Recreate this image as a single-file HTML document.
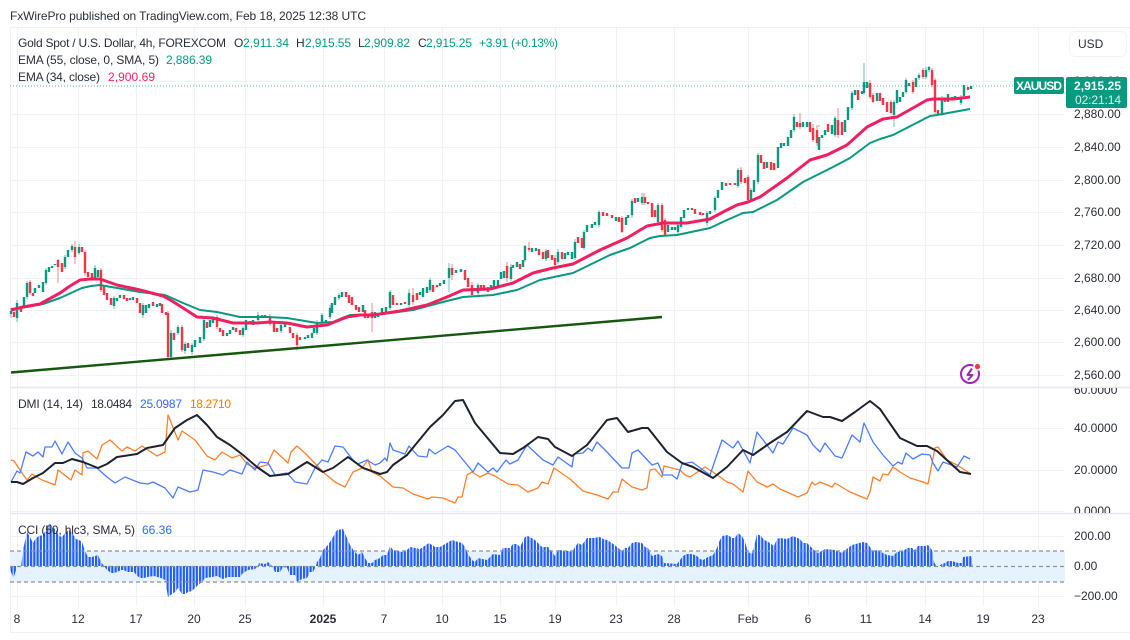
<!DOCTYPE html>
<html><head><meta charset="utf-8"><title>XAUUSD</title>
<style>
html,body{margin:0;padding:0;background:#fff;width:1130px;height:640px;overflow:hidden}
svg{display:block;filter:blur(.3px)}
text{font-family:"Liberation Sans",sans-serif;font-size:12px;fill:#2a2e39}
.g{stroke:#089981;fill:none;stroke-width:2.4}
.r{stroke:#f23645;fill:none;stroke-width:2.4}
.w{stroke-width:1;opacity:.6}
.t{text-anchor:middle}
.k{fill:#089981}.p{fill:#f2245f}
</style></head><body>
<svg width="1130" height="640" viewBox="0 0 1130 640" xmlns="http://www.w3.org/2000/svg">
<defs>
<pattern id="st" patternUnits="userSpaceOnUse" x="10" y="0" width="3.25" height="640"><rect x="0.5" y="0" width="2.2" height="640" fill="#1f5cff"/></pattern>
<clipPath id="c1"><rect x="1066" y="388" width="64" height="125"/></clipPath>
</defs>
<rect width="1130" height="640" fill="#fff"/>
<text x="10" y="20" textLength="356">FxWirePro published on TradingView.com, Feb 18, 2025 12:38 UTC</text>

<!-- frame -->
<path d="M10 27.5H1130M10 632.5H1130M10.5 27V632" stroke="#f0f1f5" fill="none"/>
<!-- grid -->
<path stroke="#f1f2f6" fill="none" d="M17.5 28V606M78.5 28V606M136.5 28V606M194.5 28V606M245.5 28V606M323.5 28V606M384.5 28V606M442.5 28V606M500.5 28V606M555.5 28V606M616.5 28V606M674.5 28V606M748.5 28V606M808.5 28V606M866.5 28V606M925.5 28V606M983.5 28V606M1038.5 28V606
M10 81.5H1065M10 114.5H1065M10 147.5H1065M10 180.5H1065M10 212.5H1065M10 245.5H1065M10 278.5H1065M10 310.5H1065M10 342.5H1065M10 375.5H1065
M10 428.5H1065M10 470.5H1065M10 511.5H1065M10 536.5H1065M10 596.5H1065"/>
<path d="M10 387.5H1130M10 513.5H1130" stroke="#e6e7ef" stroke-width="1.5" fill="none"/>
<!-- price line -->
<path d="M10 86H1065" stroke="#089981" stroke-width="1" stroke-dasharray="1 2" opacity=".7" fill="none"/>

<!-- wicks -->
<path class="g w" d="M11 308V318M17 300V322M27 281V299M46 268V285M65 255V269M72 244V252M79 244V255M95 265V280M114 296V309M143 303V318M171 330V358M178 325V335M185 342V354M192 343V355M204 318V341M243 326V337M258 312V322M281 323V333M317 320V335M322 313V324M330 305V319M339 293V300M390 290V310M409 289V307M430 278V292M449 263V292M478 283V297M511 264V281M525 245V262M546 249V261M558 249V264M575 239V260M584 230V250M599 210V227M632 199V218M642 193V205M658 203V223M678 223V234M707 211V226M715 196V212M738 168V188M751 188V202M758 153V184M794 114V132M819 125V127M835 116V137M852 91V110M864 63V95M894 100V127M906 78V94M919 73V80M926 67V79M929 66V72M942 96V116M961 95V105"/>
<path class="r w" d="M30 280V295M58 259V283M75 241V264M85 250V276M101 268V292M168 311V359M182 325V352M217 315V329M270 314V326M297 333V350M372 303V332M413 288V305M452 264V280M472 282V297M507 262V282M529 242V252M555 255V270M622 216V233M644 193V205M662 203V232M665 218V236M741 167V184M748 175V201M800 113V129M813 124V142M817 125V146M838 108V138M870 80V99M873 93V103M891 100V114M913 80V94M923 68V79M932 68V87M935 78V114"/>

<!-- candles -->
<path class="g" d="M11 311V314M17 303V318M24 297V308M27 283V297M35 288V293M39 285V288M43 282V292M46 270V283M49 267V272M52 266V268M55 264V265M65 257V267M68 250V257M72 246V250M79 247V253M95 268V278M98 270V277M114 298V306M117 298V301M120 295V298M130 298V300M133 297V300M143 305V315M146 305V313M149 304V308M157 304V307M160 303V306M171 333V357M178 327V333M185 344V351M192 345V352M195 340V347M200 337V343M204 320V339M210 320V327M213 317V323M227 333V336M230 330V334M233 327V330M243 328V335M246 320V330M253 320V325M258 315V320M281 325V331M285 322V327M305 337V339M308 335V338M312 333V338M314 328V333M317 323V333M322 315V323M326 320V322M330 308V317M332 303V313M335 297V305M339 295V298M342 292V297M363 305V312M375 312V318M378 313V317M382 308V315M386 307V312M390 292V308M401 303V305M409 293V305M420 292V295M423 288V297M427 287V293M430 280V290M440 283V286M444 280V284M449 268V278M456 270V273M461 269V272M478 285V293M491 285V290M494 280V287M498 280V286M501 272V279M504 271V278M511 267V279M513 265V268M517 262V267M523 260V267M525 246V260M532 248V252M536 248V251M546 251V259M558 252V262M565 253V259M568 252V255M572 252V259M575 242V258M584 232V248M587 225V232M592 224V228M595 222V225M599 212V225M616 217V221M626 217V225M628 215V218M632 201V215M638 198V202M642 197V203M658 205V222M668 225V232M672 227V230M675 227V230M678 225V232M681 217V227M684 210V218M688 208V210M707 213V223M710 211V214M715 198V210M718 190V198M722 182V190M738 170V186M751 190V200M754 180V192M758 155V182M767 162V168M778 147V168M781 143V148M784 143V146M788 137V146M791 130V138M794 117V130M803 122V127M807 122V127M819 137V150M822 135V138M825 130V135M832 125V134M835 118V135M845 120V132M848 107V120M852 93V108M855 90V95M862 91V94M864 82V93M867 82V88M877 93V101M894 102V115M897 90V103M900 97V102M903 92V97M906 80V92M909 83V86M916 78V87M919 75V78M926 70V77M929 67V70M942 98V115M948 94V102M955 96V99M961 97V103M964 85V96M971 86V89"/>
<path class="r" d="M14 312V317M21 306V312M30 282V293M33 293V296M58 260V267M62 263V272M75 247V257M82 247V252M85 252V273M88 272V277M92 273V278M101 270V290M104 285V295M107 293V300M111 298V305M124 295V299M127 298V301M137 298V303M140 303V313M153 302V306M162 304V313M166 312V315M168 313V357M174 333V340M182 327V350M188 343V348M207 322V328M217 317V327M220 328V332M223 330V336M236 328V332M240 330V335M250 321V323M262 315V318M265 315V318M270 316V324M274 322V332M277 328V332M290 327V333M293 333V338M297 335V345M300 337V340M346 292V297M349 295V303M352 297V305M356 305V310M359 307V312M365 310V318M368 315V318M372 312V318M393 295V305M397 303V305M405 302V304M413 295V302M417 293V300M433 285V292M437 285V287M452 268V275M465 270V280M468 278V287M472 285V295M475 288V290M481 285V288M484 285V289M488 287V292M507 266V278M520 264V269M529 248V250M539 249V255M543 252V259M548 250V258M552 255V260M555 258V265M562 252V259M578 237V243M582 238V248M603 212V216M607 213V216M612 215V218M619 217V222M622 218V232M635 198V203M645 197V203M648 202V204M652 203V217M655 210V217M662 205V230M665 220V235M692 208V210M695 209V214M700 212V215M703 213V215M726 183V186M730 183V185M735 183V185M741 170V182M745 178V183M748 177V200M761 155V163M764 162V169M771 162V170M774 163V170M797 122V127M800 123V127M810 122V132M813 128V140M817 130V143M828 124V132M838 120V135M842 122V135M858 90V100M870 83V97M873 95V102M880 93V101M883 98V105M887 102V112M891 102V113M913 82V92M923 70V77M932 70V85M935 80V112M938 110V115M945 98V102M952 97V100M958 97V100M968 87V90"/>

<!-- EMA 55 -->
<polyline fill="none" stroke="#089981" stroke-width="2" stroke-linejoin="round" points="11,309 27,307 43,304 60,298 71,293 82,288 91,286 100,285 117,288 140,292 165,295 174,299 183,303 200,310 217,312 240,317 267,317 287,318 317,323 333,322 342,318 350,315 383,314 413,310 443,302 463,297 493,295 517,290 540,280 573,273 610,255 630,248 650,238 660,236 677,235 710,228 727,220 743,213 753,212 777,200 803,182 833,167 850,158 870,143 880,139 893,135 930,116 937,115 970,109"/>
<!-- EMA 34 -->
<polyline fill="none" stroke="#ee2060" stroke-width="3" stroke-linejoin="round" points="11,310 23,307 40,304 60,293 70,286 80,280 90,279 100,279 117,285 140,290 163,296 172,301 180,306 197,317 213,318 233,323 257,323 270,322 287,323 307,327 327,325 337,321 347,317 360,315 373,315 400,311 427,305 447,297 463,290 490,289 513,283 533,273 553,268 573,264 600,250 627,238 647,226 663,223 687,223 710,219 725,211 737,205 748,202 760,197 787,178 810,160 827,155 847,145 857,136 867,127 883,119 897,117 927,100 933,99 953,99 970,97"/>
<!-- trend -->
<path d="M11 372.5L662 317" stroke="#16570f" stroke-width="2.4" fill="none"/>

<!-- icon -->
<g fill="none" stroke="#9c27b0" stroke-width="2">
<circle cx="970" cy="374" r="9"/>
<path d="M972 368.5L967.5 375H972.5L968 380" stroke-linejoin="round"/>
</g>
<circle cx="977.5" cy="366.5" r="4.2" fill="#fff"/><circle cx="977.5" cy="366.5" r="2.6" fill="#f23645"/>

<!-- DMI -->
<polyline fill="none" stroke="#ff7f2a" stroke-width="1.3" stroke-linejoin="round" points="11,460 14,461 22,473 27,480 32,474 42,480 55,485 58,470 71,480 75,470 82,475 83,453 88,451 97,459 102,445 110,440 122,451 127,447 135,451 142,446 157,456 165,452 168,415 178,440 182,431 195,440 207,456 215,460 222,452 232,458 240,455 247,464 255,468 267,465 274,450 288,463 291,452 297,446 307,455 323,472 335,482 345,487 353,472 362,468 368,460 372,472 380,476 393,487 403,488 413,494 428,499 432,497 443,498 455,503 458,497 462,497 467,475 472,472 480,477 488,473 495,476 508,484 518,485 528,492 538,488 542,482 548,484 554,468 570,479 583,491 597,495 608,499 613,492 618,492 622,479 632,487 642,490 647,488 650,470 655,469 662,477 664,466 680,470 685,475 690,477 705,467 713,472 727,482 733,484 743,492 748,471 757,482 767,487 773,484 780,489 798,497 807,493 812,482 815,485 820,482 832,487 835,483 850,492 867,499 870,492 873,477 880,481 883,474 888,475 893,467 900,472 910,478 923,482 928,484 935,448 938,447 947,460 957,465 971,474"/>
<polyline fill="none" stroke="#4a7dff" stroke-width="1.3" stroke-linejoin="round" points="11,482 17,471 20,473 26,452 33,456 38,452 43,457 45,447 52,447 55,441 62,454 68,442 75,453 82,458 87,468 97,468 107,477 115,483 125,477 140,483 148,484 153,482 165,488 173,498 178,487 190,492 198,490 203,470 213,472 223,475 230,470 242,474 247,462 255,470 260,462 268,463 275,475 287,473 295,482 307,484 315,468 322,460 328,462 335,446 343,447 353,460 358,464 367,460 375,465 380,463 385,458 387,461 390,443 393,450 405,454 409,446 418,456 427,457 429,449 435,454 448,446 455,450 473,472 478,463 488,472 493,468 497,472 506,460 510,464 518,460 527,445 543,460 553,465 558,457 572,467 574,454 583,453 588,448 592,451 597,442 607,452 622,468 629,468 632,453 638,450 652,465 658,463 663,475 672,475 677,479 682,464 692,462 710,475 722,440 733,448 738,441 750,463 757,432 773,453 778,442 783,444 793,428 807,435 813,445 820,452 825,443 835,456 842,458 852,435 860,442 864,423 873,442 883,455 893,466 898,462 902,464 906,453 913,459 922,454 930,455 933,463 938,471 943,462 957,467 964,456 970,459"/>
<polyline fill="none" stroke="#1e222d" stroke-width="2" stroke-linejoin="round" points="11,482 17,482 23,484 33,478 43,473 55,463 63,463 72,459 83,462 98,468 107,464 117,457 137,454 147,448 163,445 175,428 187,420 197,415 207,425 217,437 230,445 243,455 257,467 270,476 288,474 307,462 323,472 333,468 348,457 363,468 380,474 387,472 393,465 407,455 430,427 443,415 455,401 463,400 475,423 485,435 500,453 513,454 523,448 538,437 548,439 555,447 572,456 587,445 607,420 617,418 628,432 642,428 648,428 667,452 682,463 693,467 713,478 727,467 743,450 753,455 770,443 787,432 807,411 823,417 830,417 842,421 855,412 870,401 880,409 900,438 917,446 927,446 937,451 960,472 971,474"/>

<!-- CCI -->
<rect x="10" y="551" width="1055" height="31" fill="#e6f3fe"/>
<path d="M10 566L11 572 13.5 578 17 567 21 567 23 550 27 532 30 537 33 543 36 538 39 536 43 535 46 530 49 523 53 527 56 530 59 536 62 537 66 532 69 530 72 533 76 539 79 540 82 542 85 551 88 557 92 557 95 556 98 555 101 562 104 566 107 570 111 573 114 573 117 572 121 570 124 570 127 572 131 572 134 572 137 576 141 578 144 578 147 577 154 576 161 578 165 580 168 597 172 594 175 592 178 588 182 594 185 594 188 592 192 591 195 588 198 585 202 582 205 578 212 577 217 576 223 579 228 577 233 577 240 577 243 573 248 570 255 569 258 566 259 563 265 564 268 562 272 566 275 572 280 572 283 567 287 568 290 575 295 575 297 582 302 579 307 578 310 572 313 572 316 566 317 562 320 558 323 550 327 546 330 542 333 537 337 530 343 529 347 538 350 545 354 551 358 555 362 552 365 558 368 563 372 563 375 560 380 558 383 555 387 555 390 546 393 550 402 552 407 550 410 547 420 549 423 547 429 543 435 547 440 547 452 540 455 541 462 543 465 547 468 554 472 560 475 562 478 558 487 560 493 554 500 555 503 548 510 548 513 544 517 544 520 547 525 537 528 536 535 540 542 547 548 547 552 552 555 556 558 550 568 551 572 552 575 547 578 543 582 545 587 538 593 538 600 537 603 539 607 540 612 543 617 547 622 551 625 548 628 548 632 543 636 542 642 543 645 547 648 548 652 556 655 555 658 554 662 556 664 563 677 564 680 560 683 556 687 554 692 554 697 556 700 559 703 560 708 557 713 555 717 548 719 542 722 536 728 535 732 538 735 538 738 533 742 536 745 542 748 552 752 554 754 547 757 534 761 536 764 540 767 541 771 544 774 546 777 539 780 538 787 539 793 536 800 539 803 543 807 543 810 546 815 551 818 553 822 551 825 549 835 550 842 553 848 548 852 545 863 542 867 543 870 547 873 551 878 550 883 553 887 555 893 556 897 552 903 551 907 548 912 548 915 550 918 546 925 546 928 545 932 550 934 562 937 567 942 564 945 563 948 561 952 561 958 563 962 563 963 557 971 556 973 566Z" fill="url(#st)"/>
<path d="M10 551H1065M10 566.5H1065M10 582H1065" stroke="#8f9197" stroke-dasharray="4 3" fill="none" stroke-width="1.2"/>

<!-- legends -->
<text x="18" y="47" textLength="208">Gold Spot / U.S. Dollar, 4h, FOREXCOM</text>
<text x="234" y="47">O</text><text x="243" y="47" class="k" textLength="46">2,911.34</text>
<text x="296" y="47">H</text><text x="305" y="47" class="k" textLength="46">2,915.55</text>
<text x="358" y="47">L</text><text x="364" y="47" class="k" textLength="46">2,909.82</text>
<text x="418" y="47">C</text><text x="426" y="47" class="k" textLength="46">2,915.25</text>
<text x="479" y="47" class="k" textLength="79">+3.91 (+0.13%)</text>
<text x="18" y="64" textLength="141">EMA (55, close, 0, SMA, 5)</text><text x="166" y="64" class="k" textLength="46">2,886.39</text>
<text x="18" y="81" textLength="82">EMA (34, close)</text><text x="108" y="81" class="p" textLength="47">2,900.69</text>
<text x="18" y="408" textLength="65">DMI (14, 14)</text><text x="91" y="408" textLength="41">18.0484</text><text x="140" y="408" style="fill:#2f6bff" textLength="42">25.0987</text><text x="190" y="408" style="fill:#f57c00" textLength="41">18.2710</text>
<text x="18" y="534" textLength="117">CCI (50, hlc3, SMA, 5)</text><text x="142" y="534" style="fill:#2f6bff" textLength="30">66.36</text>

<!-- price axis -->
<rect x="1069.5" y="31.5" width="57" height="25" rx="6" fill="#fff" stroke="#f0f3fa"/>
<text x="1078" y="48">USD</text>
<g>
<text x="1074" y="118">2,880.00</text><text x="1074" y="151">2,840.00</text><text x="1074" y="184">2,800.00</text><text x="1074" y="216">2,760.00</text><text x="1074" y="249">2,720.00</text><text x="1074" y="282">2,680.00</text><text x="1074" y="314">2,640.00</text><text x="1074" y="346">2,600.00</text><text x="1074" y="379">2,560.00</text>
<text x="1074" y="85">2,920.00</text>
</g>
<g clip-path="url(#c1)">
<text x="1074" y="394">60.0000</text><text x="1074" y="432">40.0000</text><text x="1074" y="474">20.0000</text><text x="1074" y="515">0.0000</text>
</g>
<text x="1074" y="540">200.00</text><text x="1074" y="570">0.00</text><text x="1074" y="600">−200.00</text>

<!-- tags -->
<rect x="1014" y="77" width="50" height="17" rx="2" fill="#089981"/>
<text x="1039" y="90" class="t" style="fill:#fff;font-weight:bold" textLength="46">XAUUSD</text>
<rect x="1066" y="77" width="61" height="31" rx="2" fill="#089981"/>
<text x="1074" y="90" style="fill:#fff;font-weight:bold" textLength="47">2,915.25</text>
<text x="1075" y="104" style="fill:#d5f0ea" textLength="46">02:21:14</text>

<!-- time axis -->
<text class="t" x="17" y="623">8</text><text class="t" x="78" y="623">12</text><text class="t" x="136" y="623">17</text><text class="t" x="194" y="623">20</text><text class="t" x="245" y="623">25</text>
<text class="t" x="323" y="623" style="font-weight:bold">2025</text>
<text class="t" x="384" y="623">7</text><text class="t" x="442" y="623">10</text><text class="t" x="500" y="623">15</text><text class="t" x="555" y="623">19</text><text class="t" x="616" y="623">23</text><text class="t" x="674" y="623">28</text><text class="t" x="748" y="623">Feb</text><text class="t" x="808" y="623">6</text><text class="t" x="866" y="623">11</text><text class="t" x="925" y="623">14</text><text class="t" x="983" y="623">19</text><text class="t" x="1038" y="623">23</text>
</svg>
</body></html>
